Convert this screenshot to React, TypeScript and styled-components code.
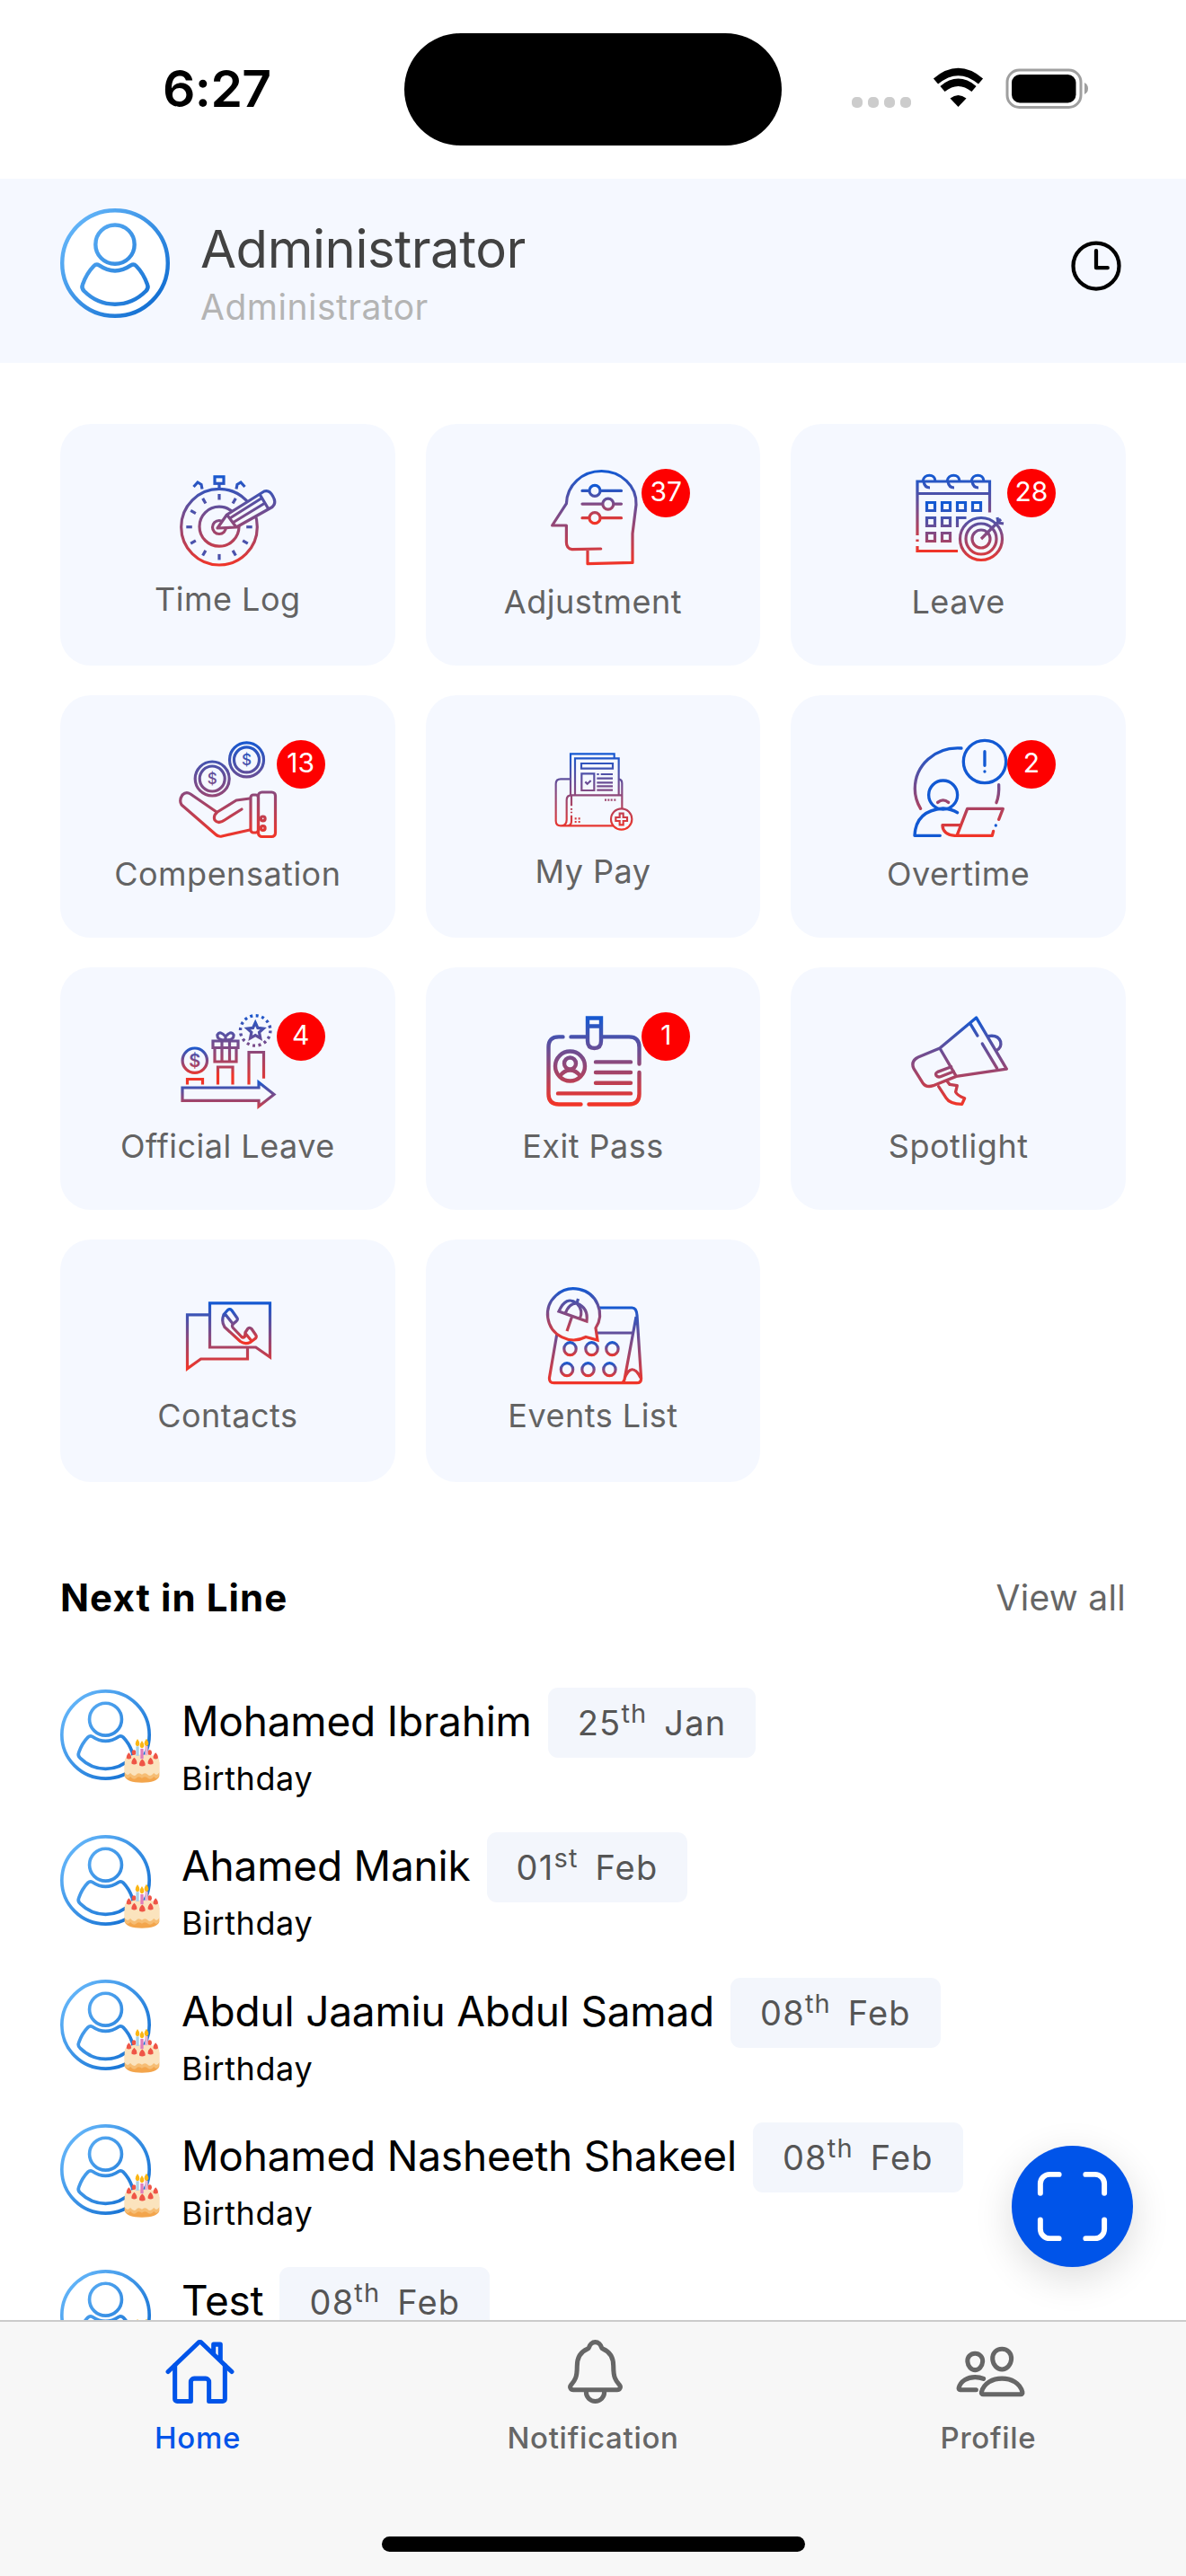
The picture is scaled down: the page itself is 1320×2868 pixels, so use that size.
import * as React from "react";
import styled, { createGlobalStyle } from "styled-components";
import {
  IoHomeOutline,
  IoNotificationsOutline,
  IoPeopleOutline,
  IoScanOutline,
  IoTimeOutline,
} from "react-icons/io5";

const GlobalStyle = createGlobalStyle`
  * {
    box-sizing: border-box;
  }
  body {
    margin: 0;
    background: #fff;
    font-family: Inter, "Liberation Sans", sans-serif;
  }
`;

const Screen = styled.div`
  position: relative;
  display: flex;
  flex-direction: column;
  width: 1320px;
  height: 2868px;
  overflow: hidden;
  background: #fff;
`;

// Status bar
const StatusBar = styled.div`
  flex: none;
  display: grid;
  grid-template-columns: 450px 420px 1fr;
  height: 199px;
  padding-top: 37px;
`;

const Clock = styled.div`
  padding-left: 181px;
  font-size: 57px;
  font-weight: 600;
  line-height: 123px;
  letter-spacing: -0.6px;
`;

const Island = styled.div`
  height: 125px;
  border-radius: 63px;
  background: #000;
`;

const Indicators = styled.svg`
  display: block;
  margin: 36px 0 0 78px;
`;

// Header
const Header = styled.header`
  flex: none;
  display: flex;
  align-items: flex-start;
  height: 204.5px;
  padding: 33px 66px 0 67px;
  background: #f5f8ff;
`;

const HeaderText = styled.div`
  flex: 1;
  padding: 10px 0 0 34px;
`;

const UserName = styled.div`
  color: #424242;
  font-size: 58px;
  line-height: 70px;
  letter-spacing: -0.45px;
`;

const UserRole = styled.div`
  margin-top: 5px;
  color: #b4b4b4;
  font-size: 39px;
  line-height: 49px;
  letter-spacing: 0.5px;
`;

const HistoryIcon = styled(IoTimeOutline)`
  margin: 30px 0 0 0;
  font-size: 68px;
`;

// Body
const Main = styled.main`
  flex: 1;
  min-height: 0;
  overflow: hidden;
  padding: 68px 67px 0;
`;

const Grid = styled.div`
  display: grid;
  grid-template-columns: repeat(3, 1fr);
  grid-auto-rows: 269.3px;
  gap: 33.7px 34px;
`;

const Tile = styled.div`
  position: relative;
  display: flex;
  flex-direction: column;
  align-items: center;
  padding-top: 44px;
  border-radius: 34px;
  background: #f5f8ff;
`;

const TileIcon = styled.svg<{ $gap: number }>`
  flex: none;
  display: block;
  width: 120px;
  height: 120px;
  margin-bottom: ${(p) => p.$gap}px;
  fill: none;
  stroke-width: 3.2;
  overflow: visible;
`;

const TileLabel = styled.div`
  color: #636363;
  font-size: 36px;
  line-height: 44px;
  letter-spacing: 0.5px;
`;

const Badge = styled.div`
  position: absolute;
  top: 50px;
  right: 78px;
  width: 54px;
  height: 54px;
  border-radius: 50%;
  background: #fe0000;
  color: #fff;
  font-size: 30px;
  line-height: 51px;
  text-align: center;
`;

const SectionHead = styled.div`
  display: flex;
  justify-content: space-between;
  margin-top: 104px;
  line-height: 50px;
`;

const SectionTitle = styled.h2`
  margin: 0;
  font-size: 42px;
  font-weight: 700;
  letter-spacing: 1.1px;
`;

const ViewAll = styled.span`
  color: #666;
  font-size: 39px;
  letter-spacing: 0.3px;
`;

const List = styled.div`
  margin-top: 75px;
`;

const Row = styled.div`
  display: flex;
  height: 161.4px;
`;

const AvatarWrap = styled.div`
  position: relative;
  width: 101px;
  height: 101px;
  margin: 2.5px 34px 0 0;
`;

const Cake = styled.svg`
  position: absolute;
  left: 71px;
  top: 55px;
  width: 40px;
  height: 49px;
`;

const NameLine = styled.div`
  display: flex;
  align-items: flex-start;
  gap: 18px;
`;

const PersonName = styled.span`
  font-size: 46px;
  line-height: 75px;
  letter-spacing: -0.2px;
`;

const DateChip = styled.span`
  height: 78px;
  padding: 0 33px;
  border-radius: 11px;
  background: #f3f6fc;
  color: #555;
  font-size: 38px;
  line-height: 79px;
  letter-spacing: 1.2px;
  word-spacing: 7px;
  white-space: pre;
`;

const Ordinal = styled.sup`
  font-size: 29px;
  line-height: 0;
  vertical-align: 14px;
`;

const Occasion = styled.div`
  font-size: 36px;
  line-height: 47px;
  letter-spacing: 0.6px;
`;

// Floating button
const ScanButton = styled.button`
  position: absolute;
  right: 59px;
  bottom: 344px;
  display: flex;
  align-items: center;
  justify-content: center;
  width: 135px;
  height: 135px;
  padding: 0;
  border: 0;
  border-radius: 50%;
  background: #0054e9;
  box-shadow: 0 12px 44px rgba(0, 0, 0, 0.14);
  color: #fff;
  font-size: 95px;
`;

// Tab bar
const TabBar = styled.nav`
  flex: none;
  display: grid;
  grid-template-columns: repeat(3, 1fr);
  grid-template-rows: 1fr auto;
  height: 285px;
  border-top: 2px solid #cbcbcb;
  background: #f7f7f7;
`;

const Tab = styled.div<{ $active?: boolean }>`
  display: flex;
  flex-direction: column;
  align-items: center;
  padding-top: 15px;
  color: ${(p) => (p.$active ? "#0054e9" : "#666")};
  font-size: 33px;
  font-weight: 500;
  line-height: 40px;
  letter-spacing: 0.7px;

  svg {
    margin: 0 0 13px 4px;
    font-size: 81px;
  }
`;

const HomeIndicator = styled.div`
  grid-column: 1 / -1;
  justify-self: center;
  width: 471px;
  height: 17px;
  margin-bottom: 27px;
  border-radius: 9px;
  background: #000;
`;

type FadeProps = { id: string; y1: number; y2: number };

// Vertical blue to red gradient shared by the menu icons
const Fade = ({ id, y1, y2 }: FadeProps) => (
  <linearGradient id={id} gradientUnits="userSpaceOnUse" x1="0" y1={y1} x2="0" y2={y2}>
    <stop offset="0" stopColor="#1259d3" />
    <stop offset="0.5" stopColor="#834a83" />
    <stop offset="1" stopColor="#f13528" />
  </linearGradient>
);

const ticks = [0, 30, 60, 90, 120, 150, 180, 210, 240, 270, 300, 330];

const TimeLogArt = () => (
  <g stroke="url(#timelog)">
    <Fade id="timelog" y1={12} y2={114} />
    <circle cx="51" cy="70.7" r="42.3" />
    <circle cx="51" cy="70.2" r="22" />
    <circle cx="51" cy="71" r="7.5" />
    {ticks.map((a) => (
      <path key={a} d="M51 34v6.5" transform={`rotate(${a} 51 70.7)`} />
    ))}
    <rect x="46" y="14.8" width="10" height="7.5" />
    <path d="M51 23v5M22.5 26l4.5-5 4 2.5 1 5M79.5 26l-4.5-5-4 2.5-1 5" />
    <path
      d="M49 72l10.5-15L101 31q6-2 10 6 4 7-1 11.5L70 71zM59.5 57l10.5 14M96.5 35l9.5 16M62 61.500L98.500 38.500M66 66L102 44"
      fill="#f5f8ff"
      strokeLinejoin="round"
    />
  </g>
);

const AdjustmentArt = () => (
  <g stroke="url(#adjust)" strokeLinecap="round" strokeLinejoin="round">
    <Fade id="adjust" y1={8} y2={112} />
    <Fade id="sliders" y1={26} y2={65} />
    <path d="M68.7 95l-32 .7q-6.3-1-6.3-8V69H14.600L30.4 44.7C31 24 48 8.5 69.5 8.5S109 25 108 46l-4 32v32.4l-50 1.3v-16" />
    <g stroke="url(#sliders)" fill="#f5f8ff">
      <path d="M48 30.4h43.5M48 45.1h43.5M48 60.7h43.5" />
      <circle cx="62" cy="30.4" r="6" />
      <circle cx="76.8" cy="45.1" r="6" />
      <circle cx="62" cy="60.7" r="6" />
    </g>
  </g>
);

const LeaveArt = () => (
  <g stroke="url(#leave)">
    <Fade id="leave" y1={12} y2={98} />
    <Fade id="days" y1={46} y2={110} />
    <path d="M14 80V20h80.5v34.5M14 33.5h80.5M14 84.5v2.5M14 92v5.5h45" />
    <path d="M20 20c1-9 14-9 14 0M47 20c1-9 14-9 14 0M74 20c1-9 14-9 14 0M21 20q1 7 7 7M48 20q1 7 7 7M75 20q1 7 7 7" />
    <g stroke="url(#days)">
      <path d="M24.5 43.5h9v9h-9zM41.5 43.5h9v9h-9zM58.5 43.5h9v9h-9zM75.5 43.5h9v9h-9zM24.5 60.5h9v9h-9zM41.5 60.5h9v9h-9zM58.5 71V60.5h10M24.5 77.5h9v9h-9zM41.5 77.5h9v9h-9z" />
      <circle cx="85" cy="84" r="23.5" />
      <circle cx="85" cy="84" r="17" />
      <circle cx="85" cy="84" r="10" />
      <path d="M85 84l22-22M103 60l1 6 6 1" />
    </g>
  </g>
);

const CompensationArt = () => (
  <g stroke="url(#comp)" strokeLinejoin="round" strokeLinecap="round">
    <Fade id="comp" y1={6} y2={114} />
    <circle cx="81.5" cy="27.9" r="19" />
    <circle cx="81.5" cy="27.9" r="14" />
    <circle cx="43.2" cy="49" r="19" />
    <circle cx="43.2" cy="49" r="14" />
    <path d="M85 71l-15 2-21 13q-5 4-3 9 4 5 11 0l19-12M48 86L19 66q-5-3-9 1-4 6-1 11l38 33q3 3 7 2l31-7" />
    <rect x="86" y="67" width="8.5" height="42" rx="3" />
    <rect x="94.5" y="64" width="19" height="49.500" rx="4" />
    <circle cx="99.7" cy="93.4" r="2.4" />
    <circle cx="99.7" cy="104" r="2.4" />
    <g stroke="none" fill="url(#comp)" fontSize="17" fontWeight="500" textAnchor="middle">
      <text x="81.5" y="34">$</text>
      <text x="43.2" y="55.2">$</text>
    </g>
  </g>
);

const MyPayArt = () => (
  <g transform="translate(0 1.7) scale(.33333)" stroke="url(#pay)" strokeWidth="6.5">
    <Fade id="pay" y1={56} y2={312} />
    <path d="M105 197V59h146v14M120 197V74h146v123M141 91h105v17H141zM142 125h42v56h-42zM154 152l7 7 12-11" />
    <path d="M193 127h7M206 127h40M193 141h53M193 155h53M193 167h53M193 180h53" />
    <path d="M105 143H72q-16 0-16 16v124q0 16 16 16h176M72 299q20 0 20-20v-66q0-16 16-16h169M108 197v36M108 241v5M108 252v5M108 264v20q0 15-14 15M266 143q11 2 11 14v86" />
    <path d="M219 213h6M229 213h6M239 213h6M250 213h6M119 275h6M131 275h6M119 286h6M131 286h6" />
    <circle cx="275" cy="277" r="35" />
    <path d="M269 258h12v13h13v12h-13v13h-12v-13h-13v-12h13z" />
  </g>
);

const OvertimeArt = () => (
  <g
    transform="translate(-146.7 -48.3) scale(.33333)"
    stroke="#1259d3"
    strokeWidth="10"
    strokeLinecap="round"
    strokeLinejoin="round"
  >
    <Fade id="over" y1={190} y2={482} />
    <g stroke="url(#over)">
      <path d="M629 190C540 184 474 248 474 325q0 36 19 67M754 312q2 34-8 60M550 371q18-15 36 0" />
      <path d="M736 467l-4 15H607q-40-4-41-35h59M615 480l34-88h119l-14 36" />
    </g>
    <circle cx="707" cy="235" r="71" />
    <path d="M707 201v47M707 268v.1M744 448v.1" />
    <circle cx="568" cy="346" r="48" />
    <path d="M558 482h-85q4-84 95-91 28 2 48 14" />
  </g>
);

const OfficialLeaveArt = () => (
  <g>
    <Fade id="offCoin" y1={44} y2={76} />
    <Fade id="offGift" y1={6} y2={86} />
    <Fade id="offArrow" y1={82} y2={118} />
    <g stroke="url(#offCoin)">
      <circle cx="23.8" cy="59.7" r="13.7" />
    </g>
    <text x="23.8" y="67" fill="url(#offCoin)" fontSize="20" fontWeight="600" textAnchor="middle">
      $
    </text>
    <g stroke="url(#offGift)">
      <path d="M44 38h28v7.5H44zM46 45.5h24V61H46zM54 38v23M62.5 38v23" />
      <path d="M58 37q-10 0-9-6 3-5 9 2v4q10 0 9-6-3-5-9 2" />
      <path d="M91.2 17.5l2.7 5.9 6.3.7-4.7 4.3 1.3 6.4-5.6-3.2-5.6 3.2 1.3-6.4-4.7-4.3 6.3-.7z" />
      <circle cx="91.2" cy="26.4" r="16.7" strokeDasharray="3 3.56" strokeWidth="3.4" />
      <path d="M84 86.4V50.5h16.5v29.2" />
    </g>
    <path d="M49.5 86.4V67H66v19.4M15.5 86.4V80.5h17v5.9" stroke="url(#offCoin)" />
    <path d="M10 90h85v-6l17 13.4-17 13.4v-6.5H10z" stroke="url(#offArrow)" />
  </g>
);

const ExitPassArt = () => (
  <g stroke="url(#exit)" strokeWidth="4.4" strokeLinecap="round">
    <Fade id="exit" y1={10} y2={108} />
    <path d="M26.5 33.4H22Q10.500 33.4 10.5 45v52q0 11.500 11.5 11.500h24.500M55.5 108.500H100q11.500 0 11.500-11.500V73M111.500 63.500V45q0-11.600-11.500-11.600H71M35.500 33.4H52" />
    <path d="M54 12.5h15V38q0 8-7.5 8T54 38zM54 21.5h15" />
    <circle cx="34.5" cy="66" r="16.5" />
    <circle cx="34.5" cy="63" r="6.5" />
    <path d="M23 77q5-6.500 11.500-6.500T46 77M63 61.4h39M63 73h39M63 84.7h39M21 96.4h81" />
  </g>
);

const SpotlightArt = () => (
  <g
    transform="translate(-146.7 -51.3) scale(.33333)"
    stroke="url(#spot)"
    strokeWidth="10"
    strokeLinecap="round"
    strokeLinejoin="round"
  >
    <Fade id="spot" y1={190} y2={480} />
    <path d="M557 292l122-102 101 171-168 25zM557 292l-72 30q-26 13-15 38l30 48q12 17 35 9l77-31" />
    <path d="M660 212l23 38M699 277l49 82M718 252q33-6 42 18 4 20-13 29" />
    <path d="M595 354l-45 17q-9 5-5 12 6 7 14 4l44-17M553 420l25 38q12 20 53 21l9-20q-26-10-30-21l5-21-25-4-8-10" />
  </g>
);

const ContactsArt = () => (
  <g stroke="url(#contacts)">
    <Fade id="contacts" y1={26} y2={100} />
    <Fade id="phone" y1={33} y2={70} />
    <path d="M40.5 26.8h67V87L91.7 76H40.5zM40.5 39.8H15.5v60L30.5 89h52V76" />
    <path
      stroke="url(#phone)"
      strokeLinejoin="round"
      d="M56 39.5l4.5-5q2.5-2 4.5.5l6 8.5q1 2-1 3.5l-3.5 3q-2 2 0 4.5l9 9.500q2 2 4 0l.5-4.5 3-4.500q2-1.500 4 .5l4.500 6.500q1.500 2 0 4l-6 4.500q-6 2.500-11-1L57 53.500q-4-6-1-14zM57.500 39l8 10M80.500 61l7 8.500"
    />
  </g>
);

const EventsArt = () => (
  <g>
    <Fade id="evCal" y1={30} y2={116} />
    <Fade id="evBubble" y1={10} y2={68} />
    <Fade id="evRow1" y1={70} y2={86} />
    <Fade id="evRow2" y1={93} y2={109} />
    <g stroke="url(#evCal)">
      <path d="M67 32h36.5q5 0 5.5 8.7l4.6 70q0 5-5 5H16.500q-5.500 0-5-6L19.700 62M64 60h39.500M108 42L95 112q-1 3-3 3.500M95 111q8-20 18-1" />
    </g>
    <g stroke="url(#evBubble)">
      <path d="M63 54.500A29 28.500 0 1 0 52 64.500L65 68z" />
      <path d="M36.500 42L31 58M22 36q8-18 20-9 13 5 11 20zM29 39q4-12 13-12 8 8 3 18M42 27l1.500-5" />
    </g>
    <g stroke="url(#evRow1)">
      <ellipse cx="34.5" cy="77.7" rx="6.700" ry="7" />
      <ellipse cx="58.5" cy="77.7" rx="6.700" ry="7" />
      <ellipse cx="81.4" cy="77.7" rx="6.700" ry="7" />
    </g>
    <g stroke="url(#evRow2)">
      <ellipse cx="31" cy="100.7" rx="6.700" ry="7" />
      <ellipse cx="54.5" cy="100.7" rx="6.700" ry="7" />
      <ellipse cx="78.4" cy="100.7" rx="6.700" ry="7" />
    </g>
  </g>
);

const Avatar = ({ size }: { size: number }) => (
  <svg width={size} height={size} viewBox="0 0 304 304" fill="#fff" stroke="url(#avatar)" strokeWidth="11">
    <defs>
      <linearGradient id="avatar" gradientUnits="userSpaceOnUse" x1="30" y1="50" x2="260" y2="260">
        <stop offset="0" stopColor="#62b4f8" />
        <stop offset="1" stopColor="#1571d3" />
      </linearGradient>
    </defs>
    <circle cx="152" cy="152" r="146.5" />
    <circle cx="152" cy="100" r="54" />
    <path d="M108 158q44 30 88 0 8-5 15 2 20 20 31 52 4 10-5 18-36 36-85 36t-85-36q-9-8-5-18 11-32 31-52 7-7 15-2z" />
  </svg>
);

const BirthdayCake = () => (
  <Cake viewBox="235 197 120 148">
    <ellipse cx="268" cy="243" rx="7" ry="9" fill="#ef5546" />
    <ellipse cx="321" cy="243" rx="7" ry="9" fill="#ef5546" />
    <path d="M237 275v48q8 21 58 21t58-21v-48z" fill="#f3a54c" />
    <path d="M237 308q9 14 19 2 9 12 18 7 9-12 21-2 10-10 22 2 9 5 18-7 9 12 18-2v14q-9 14-18 2-9 12-18 7-12-12-22-2-12-10-21 2-9 5-18-7-10 12-19-2z" fill="#f6bd74" />
    <path d="M237 268q4-18 58-18t58 18v42q-9 14-18 2-9 12-18 7-12-12-22-2-12-10-21 2-9 5-18-7-10 12-19-2z" fill="#fbe3bd" />
    <path d="M275 222h10v32h-10z" fill="#a9d3ea" />
    <path d="M305 221h10v31h-10z" fill="#ebb5d0" />
    <path d="M290 230h10v34h-10z" fill="#df7cba" />
    {/* Flames */}
    <path
      d="M280 197q8 11 7 18-2 7-7 7t-7-7q-1-7 7-18zM310 196q8 11 7 18-2 7-7 7t-7-7q-1-7 7-18zM295 203q8 11 7 18-2 7-7 7t-7-7q-1-7 7-18z"
      fill="#fbb615"
    />
    <g fill="#ef5546">
      <path d="M251 243q9 8 8 19-8 6-16 0-1-11 8-19zM341 243q9 8 8 19-8 6-16 0-1-11 8-19zM269 260q10 9 9 20-9 6-18 0-1-11 9-20zM324 260q10 9 9 20-9 6-18 0-1-11 9-20zM296 265q11 9 10 21-10 6-20 0-1-12 10-21z" />
    </g>
  </Cake>
);

const menu = [
  { label: "Time Log", art: <TimeLogArt />, gap: 9.5 },
  { label: "Adjustment", art: <AdjustmentArt />, gap: 12.5, count: 37 },
  { label: "Leave", art: <LeaveArt />, gap: 12.5, count: 28 },
  { label: "Compensation", art: <CompensationArt />, gap: 12.5, count: 13 },
  { label: "My Pay", art: <MyPayArt />, gap: 9.5 },
  { label: "Overtime", art: <OvertimeArt />, gap: 12.5, count: 2 },
  { label: "Official Leave", art: <OfficialLeaveArt />, gap: 12.5, count: 4 },
  { label: "Exit Pass", art: <ExitPassArt />, gap: 12.5, count: 1 },
  { label: "Spotlight", art: <SpotlightArt />, gap: 12.5 },
  { label: "Contacts", art: <ContactsArt />, gap: 9.5 },
  { label: "Events List", art: <EventsArt />, gap: 9.5 },
];

const people = [
  { name: "Mohamed Ibrahim", day: "25", suffix: "th", month: "Jan" },
  { name: "Ahamed Manik", day: "01", suffix: "st", month: "Feb" },
  { name: "Abdul Jaamiu Abdul Samad", day: "08", suffix: "th", month: "Feb" },
  { name: "Mohamed Nasheeth Shakeel", day: "08", suffix: "th", month: "Feb" },
  { name: "Test", day: "08", suffix: "th", month: "Feb" },
];

const App: React.FC = () => {
  return (
    <Screen>
      <GlobalStyle />
      <StatusBar>
        <Clock>6:27</Clock>
        <Island />
        {/* Signal dots, wifi and battery */}
        <Indicators width="266" height="50" viewBox="0 0 266 50">
          <g fill="#ccc">
            <rect x="0" y="35" width="12" height="12" rx="5" />
            <rect x="18" y="35" width="12" height="12" rx="5" />
            <rect x="36" y="35" width="12" height="12" rx="5" />
            <rect x="54" y="35" width="12" height="12" rx="5" />
          </g>
          <path d="M118.5 46l-9-9.5q9-7 18 0z" />
          <path d="M101 26q17.5-14.5 35 0M93.5 17.5q25-21 50 0" fill="none" stroke="#000" strokeWidth="8" />
          <rect x="173" y="5" width="82" height="41.5" rx="13.5" fill="none" stroke="#9f9f9f" strokeWidth="3" />
          <rect x="178" y="10" width="71.5" height="31.5" rx="9" />
          <path d="M259 19q4 2 4 6.5t-4 6.5z" fill="#9f9f9f" />
        </Indicators>
      </StatusBar>
      <Header>
        <Avatar size={122} />
        <HeaderText>
          <UserName>Administrator</UserName>
          <UserRole>Administrator</UserRole>
        </HeaderText>
        <HistoryIcon />
      </Header>
      <Main>
        <Grid>
          {menu.map((item) => (
            <Tile key={item.label}>
              <TileIcon $gap={item.gap} viewBox="0 0 120 120">
                {item.art}
              </TileIcon>
              <TileLabel>{item.label}</TileLabel>
              {item.count && <Badge>{item.count}</Badge>}
            </Tile>
          ))}
        </Grid>
        <SectionHead>
          <SectionTitle>Next in Line</SectionTitle>
          <ViewAll>View all</ViewAll>
        </SectionHead>
        <List>
          {people.map((person) => (
            <Row key={person.name}>
              <AvatarWrap>
                <Avatar size={101} />
                <BirthdayCake />
              </AvatarWrap>
              <div>
                <NameLine>
                  <PersonName>{person.name}</PersonName>
                  <DateChip>
                    {person.day}
                    <Ordinal>{person.suffix}</Ordinal> {person.month}
                  </DateChip>
                </NameLine>
                <Occasion>Birthday</Occasion>
              </div>
            </Row>
          ))}
        </List>
      </Main>
      <ScanButton>
        <IoScanOutline />
      </ScanButton>
      <TabBar>
        <Tab $active>
          <IoHomeOutline />
          Home
        </Tab>
        <Tab>
          <IoNotificationsOutline />
          Notification
        </Tab>
        <Tab>
          <IoPeopleOutline />
          Profile
        </Tab>
        <HomeIndicator />
      </TabBar>
    </Screen>
  );
};

export default App;
